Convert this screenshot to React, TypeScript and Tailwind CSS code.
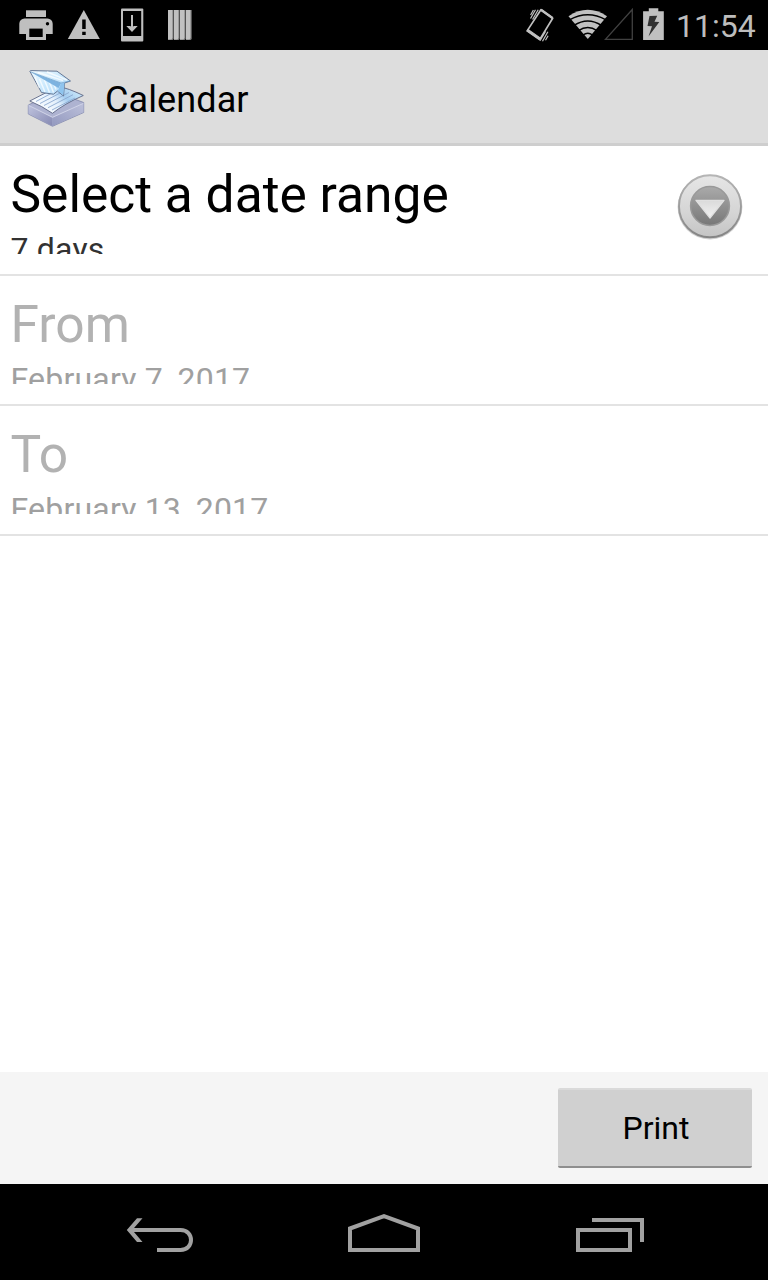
import React from "react";

function PrinterIcon() {
  return (
    <svg className="h-[50px] w-12" viewBox="12 0 48 50" fill="#bfbfbf">
      <path d="M26 10.300h20V17H26z" />
      <path d="M24.500 18.600h23a5.200 5.200 0 0 1 5.200 5.200V34H46v6H26v-6h-6.700V23.800a5.200 5.200 0 0 1 5.200-5.200z" />
      <path d="M29.300 28.600h13.400V37H29.300z" fill="#000" />
      <circle cx="47.500" cy="23.700" r="1.700" fill="#000" />
    </svg>
  );
}

function WarningIcon() {
  return (
    <svg className="h-[50px] w-12" viewBox="60 0 48 50">
      <path d="M83.800 10 99.800 39H67.800z" fill="#bfbfbf" />
      <path d="M82.200 19.500h3.500V29h-3.500zM82.200 31.800h3.500v3.200h-3.500z" fill="#000" />
    </svg>
  );
}

function DownloadIcon() {
  return (
    <svg className="h-[50px] w-12" viewBox="108 0 48 50" fill="none">
      <rect x="121" y="8.500" width="22.300" height="33" rx="1" fill="#bfbfbf" />
      <path d="M123 11h18.200v25H123z" fill="#000" />
      <path d="M132 15v13" stroke="#bfbfbf" strokeWidth="2" />
      <path d="M126.300 26h3.700l2 1 2-1h3.700L132 32z" fill="#bfbfbf" />
    </svg>
  );
}

function BarsIcon() {
  return (
    <svg className="h-[50px] w-12" viewBox="156 0 48 50">
      {[168, 174, 180, 186].map((x) => (
        <g key={x}>
          <path d={`M${x} 10h5.700v29l-1 1h-4.700z`} fill="#777" />
          <path d={`M${x} 10h4.500v28l-1 1.500h-3.500z`} fill="#c1c1c1" />
        </g>
      ))}
    </svg>
  );
}

function VibrateIcon() {
  return (
    <svg className="h-[50px] w-[46px]" viewBox="522 0 46 50" fill="none" stroke="#c0c0c0">
      <path d="M540.900 9.700 552.700 18.200 539.800 39.400 527.300 30.600z" strokeWidth="1.700" strokeLinejoin="round" />
      <path d="m528 29.500 12.300 8.600-1 1.600-12.300-8.600z" fill="#c0c0c0" strokeWidth="1.200" />
      <path d="m541 9.800 11.500 8.200" strokeWidth="2.300" />
      <path d="m530.500 18.500 5-8.800M532.600 19.500l5.600-9.800M530.600 15l2.800-5M542.500 41.200l5.400-9.500M540 40.700l5.500-9.300M545.500 40.300l2.600-4.500" strokeWidth="1.200" />
    </svg>
  );
}

function WifiIcon() {
  return (
    <svg className="h-[50px] w-9" viewBox="568 0 36 50" overflow="visible">
      <path d="M568.500 16.200Q587.800 3.500 607 16.200L587.800 39z" fill="#c0c0c0" />
      <path d="M569.500 19.800Q587.800 9.500 606 19.800M574 25.400Q587.800 16.500 601.500 25.400M578.500 30.600Q587.800 24.500 597 30.600M583 35Q587.800 31.500 592.600 35" fill="none" stroke="#000" strokeWidth="1.500" />
    </svg>
  );
}

function SignalIcon() {
  return (
    <svg className="h-[50px] w-[34px]" viewBox="604 0 34 50">
      <path d="M632.300 9.500V39.300H605.500z" fill="none" stroke="#414141" strokeWidth="1.300" />
    </svg>
  );
}

function BatteryIcon() {
  return (
    <svg className="h-[50px] w-[34px]" viewBox="638 0 34 50">
      <path d="M648.800 8.300h9.500v3h5.500V40h-20.700V11.300h5.700z" fill="#c0c0c0" />
      <path d="m649.500 16 7.700-.2-2.700 6 4.800.2-10.800 14.500 3.500-10.200-4.500-.2z" fill="#303030" />
    </svg>
  );
}

function StatusBar() {
  return (
    <div className="flex h-[50px] items-center justify-between bg-black">
      <div className="flex pl-3">
        <PrinterIcon />
        <WarningIcon />
        <DownloadIcon />
        <BarsIcon />
      </div>
      <div className="flex items-center">
        <VibrateIcon />
        <WifiIcon />
        <SignalIcon />
        <BatteryIcon />
        <span className="w-24 pt-px pl-1 text-[32px] leading-[38px] whitespace-nowrap text-[#bdbdbd]">11:54</span>
      </div>
    </div>
  );
}

function AppIcon() {
  return (
    <svg className="size-16" viewBox="24 66 64 64" strokeLinejoin="round">
      <defs>
        <linearGradient id="plane" x1="0" y1="0" x2="1" y2="1">
          <stop offset="0" stopColor="#f2fbff" />
          <stop offset="0.500" stopColor="#c9e8fd" />
          <stop offset="1" stopColor="#b0d8f6" />
        </linearGradient>
        <linearGradient id="paper" x1="0" y1="0.700" x2="1" y2="0.200">
          <stop offset="0" stopColor="#fff" />
          <stop offset="0.450" stopColor="#e4f0fc" />
          <stop offset="0.650" stopColor="#a4cdf0" />
          <stop offset="1" stopColor="#d2ecfb" />
        </linearGradient>
        <linearGradient id="leftSide" x1="0" y1="0" x2="1" y2="1">
          <stop offset="0" stopColor="#bfc3de" />
          <stop offset="1" stopColor="#8589b2" />
        </linearGradient>
        <linearGradient id="rightSide" x1="0" y1="1" x2="1" y2="0">
          <stop offset="0" stopColor="#9399bf" />
          <stop offset="1" stopColor="#bcc0da" />
        </linearGradient>
      </defs>
      <path d="M28.300 105 55 92 83.700 102.500V112.500L52.500 126.300 28.300 114z" fill="#aeb3d1" stroke="#8086ab" strokeWidth="0.800" />
      <path d="M28.500 105.500 52.500 117.500V126L28.500 113.700z" fill="url(#leftSide)" />
      <path d="M52.500 117.500 83.500 103.500V112.300L52.500 126z" fill="url(#rightSide)" />
      <path d="m28.500 105.300 24 12 31-14" fill="none" stroke="#d4d7ea" strokeWidth="0.900" />
      <path d="M29.800 101 58 86.500Q68 88 83.300 95.500 64 104 52.500 113.300 42 106 29.800 101z" fill="url(#paper)" stroke="#5d6684" strokeWidth="0.900" />
      <path d="m36 101.500 15-8m-11 10 22-11.500m-18 13.500 25-13m-21 15.200 25-13m-21 15.300 23-12" stroke="#8ca9d0" strokeWidth="0.900" fill="none" />
      <path d="M29.800 71.200Q30 70.500 32 70.600L57 71.200 70.500 81 64.500 83 63.500 96 57.500 91 53.500 94.200 41.500 92.500z" fill="url(#plane)" stroke="#657795" strokeWidth="1" />
      <path d="m35 77 4.500 11m0-9 5.500 13m-.5-12 5 12.500m-.5-11.500 4.500 11.500m-.5-10.500 3 7.500M38 72.500l25 8M47 72l20 8" stroke="#fff" strokeOpacity="0.700" strokeWidth="1.500" />
      <path d="M30.500 72 61 83.200 58.500 88z" fill="#7db3e0" />
      <path d="M61 83.200 64.500 83 63.300 95.300 57.800 91z" fill="#8fc4ee" />
      <path d="M30.500 71.800 61 83l9-2" fill="none" stroke="#6a9cc8" strokeWidth="0.700" />
    </svg>
  );
}

function ActionBar() {
  return (
    <div className="flex h-24 items-center gap-[17px] border-b-[3px] border-[#cecece] bg-[#dddddd] pt-[3px] pl-6">
      <AppIcon />
      <h1 className="pt-[3px] text-[36px] leading-[42px] tracking-[0.1px] text-black">Calendar</h1>
    </div>
  );
}

function DropdownBadge() {
  return (
    <svg className="size-[70px]" viewBox="675 171 70 70">
      <defs>
        <linearGradient id="rim" x1="0" y1="0" x2="0" y2="1">
          <stop offset="0" stopColor="#b5b5b5" />
          <stop offset="1" stopColor="#858585" />
        </linearGradient>
        <linearGradient id="ring" x1="0" y1="0" x2="0" y2="1">
          <stop offset="0" stopColor="#e6e6e6" />
          <stop offset="0.600" stopColor="#d5d5d5" />
          <stop offset="1" stopColor="#c4c4c4" />
        </linearGradient>
        <linearGradient id="core" x1="0" y1="0" x2="0" y2="1">
          <stop offset="0" stopColor="#aaa" />
          <stop offset="1" stopColor="#777" />
        </linearGradient>
        <linearGradient id="arrow" x1="0" y1="0" x2="0" y2="1">
          <stop offset="0" stopColor="#dadada" />
          <stop offset="1" stopColor="#f2f2f2" />
        </linearGradient>
      </defs>
      <circle cx="710" cy="207.100" r="32.400" fill="#cfcfcf" />
      <circle cx="710" cy="206.300" r="31" fill="url(#ring)" stroke="url(#rim)" strokeWidth="1.900" />
      <circle cx="710" cy="206" r="19.400" fill="url(#core)" stroke="#999" strokeWidth="1.500" />
      <path d="M696 200.300h28L710 218z" fill="url(#arrow)" stroke="#e0e0e0" strokeWidth="1.300" strokeLinejoin="round" />
    </svg>
  );
}

type RowProps = { title: string; value: string; disabled?: boolean; children?: React.ReactNode };

function PreferenceRow({ title, value, disabled, children }: RowProps) {
  return (
    <div className="flex h-[130px] justify-between border-b-2 border-[#e3e3e3] pt-[19px] pr-[23px] pl-[10px]">
      <div>
        <div className={`pl-[0.5px] text-[51.5px] leading-[60px] whitespace-nowrap ${disabled ? "text-[#b2b2b2]" : "text-black"}`}>{title}</div>
        <div className={`mt-[5px] h-6 overflow-hidden pl-[0.5px] text-[32px] leading-[38px] tracking-[0.2px] whitespace-nowrap ${disabled ? "text-[#a0a0a0]" : "text-[#323232]"}`}>{value}</div>
      </div>
      {children && <div className="pt-[6px]">{children}</div>}
    </div>
  );
}

function NavigationBar() {
  return (
    <div className="flex h-24 items-center justify-between bg-black pr-[122px] pl-[124px]">
      <svg className="h-24 w-[72px]" viewBox="124 1184 72 96" fill="none" stroke="#a1a1a1" strokeWidth="4">
        <path d="M132 1230h48.500c14 0 14 20 0 20H157" />
        <path d="m142.500 1218.200h-5.500L126.800 1230 137 1242h5.500L132.300 1230z" fill="#a1a1a1" stroke="none" />
      </svg>
      <svg className="h-24 w-[76px]" viewBox="347 1184 76 96" fill="none" stroke="#a1a1a1" strokeWidth="4">
        <path d="M350 1228.500 384 1216.100 418 1228.500V1250H350z" />
      </svg>
      <svg className="h-24 w-[72px]" viewBox="574 1184 72 96" fill="none" stroke="#a1a1a1" strokeWidth="4">
        <path d="M578 1230h52v20h-52zM592 1220h50v22" />
      </svg>
    </div>
  );
}

export default function App() {
  return (
    <div className="flex h-[1280px] w-[768px] flex-col overflow-hidden bg-white font-['Roboto',sans-serif]">
      <StatusBar />
      <ActionBar />
      <main className="flex-1">
        <PreferenceRow title="Select a date range" value="7 days">
          <DropdownBadge />
        </PreferenceRow>
        <PreferenceRow title="From" value="February 7, 2017" disabled />
        <PreferenceRow title="To" value="February 13, 2017" disabled />
      </main>
      <footer className="flex h-28 items-center justify-end bg-[#f5f5f5] pr-4">
        <button className="h-20 w-[194px] rounded-[2px] border-t-2 border-b-2 border-t-[#dadada] border-b-[#8e8e8e] bg-[#d0d0d0] pl-[2px] text-[32px] leading-[38px] text-black">
          Print
        </button>
      </footer>
      <NavigationBar />
    </div>
  );
}
